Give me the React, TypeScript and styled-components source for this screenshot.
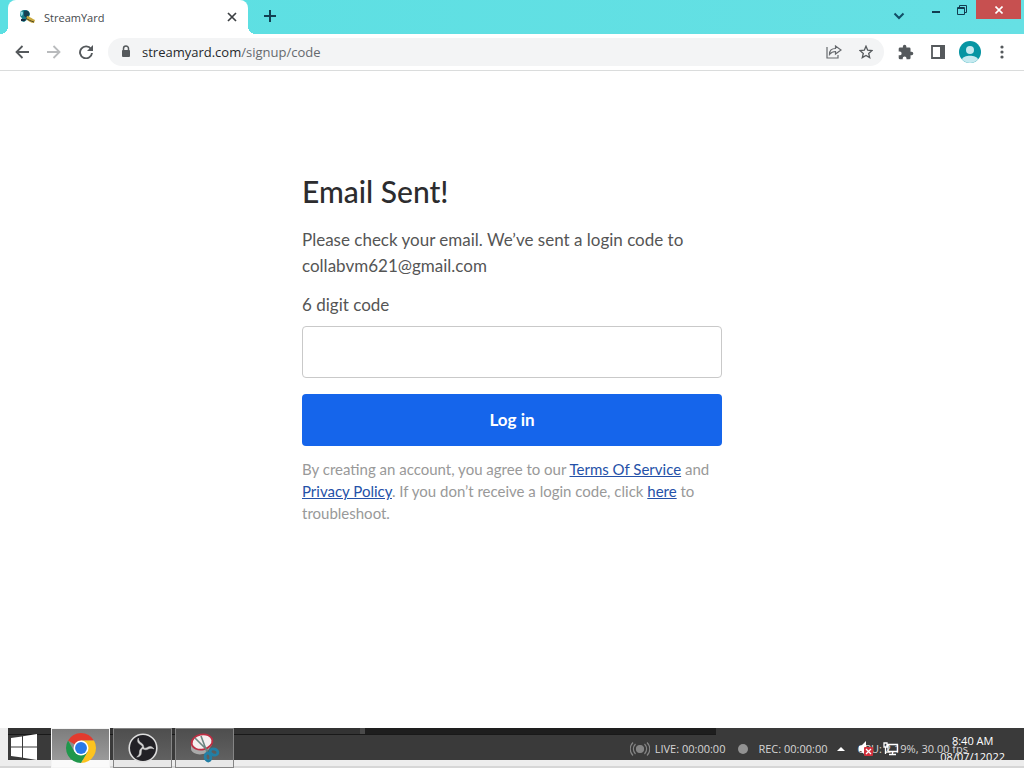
import React from "react";
import styled, { createGlobalStyle, css } from "styled-components";

const Global = createGlobalStyle`
  *, *::before, *::after { box-sizing: border-box; }
  body { margin: 0; background: #fff; font-family: "Open Sans", "Noto Sans", sans-serif; }
  button { font: inherit; padding: 0; border: 0; background: none; color: inherit; }
  h1, p { margin: 0; }
`;

const Screen = styled.div`
  min-height: 100vh;
  display: flex;
  flex-direction: column;
  overflow: hidden;
`;

const TabStrip = styled.header`
  height: 34px;
  display: flex;
  background: linear-gradient(90deg, #5bdfe2, #66e0e4);
  padding-left: 8px;
`;

const Tab = styled.div`
  position: relative;
  width: 240px;
  display: flex;
  align-items: center;
  gap: 8px;
  padding: 0 8px 0 11px;
  background: #fff;
  border-radius: 8px 8px 0 0;
  font-size: 11px;
  color: #45494d;
  &::before, &::after {
    content: "";
    position: absolute;
    bottom: 0;
    width: 8px;
    height: 8px;
  }
  &::before { left: -8px; background: radial-gradient(circle at 0 0, transparent 8px, #fff 8px); }
  &::after { right: -8px; background: radial-gradient(circle at 100% 0, transparent 8px, #fff 8px); }
`;

const TabTitle = styled.span`flex: 1;`;

const IconButton = styled.button<{ $size?: number }>`
  width: ${(p) => p.$size ?? 32}px;
  height: ${(p) => p.$size ?? 32}px;
  flex: none;
  display: flex;
  align-items: center;
  justify-content: center;
`;

const NewTab = styled(IconButton)`margin-left: 6px;`;

const WindowControls = styled.div`
  margin-left: auto;
  display: flex;
  padding-right: 3px;
`;

const WindowButton = styled.button<{ $width: number; $close?: boolean }>`
  width: ${(p) => p.$width}px;
  height: 19px;
  display: flex;
  align-items: center;
  justify-content: center;
  ${(p) => p.$close && css`background: #c75050;`}
`;

const TabSearch = styled(IconButton)`margin-right: 10px;`;

const Toolbar = styled.nav`
  height: 37px;
  display: flex;
  align-items: center;
  padding: 0 6px;
  border-bottom: 1px solid #dadcdc;
  color: #55595c;
`;

const AddressBar = styled.div`
  flex: 1;
  height: 28px;
  margin: 0 6px;
  display: flex;
  align-items: center;
  padding: 0 2px 0 10px;
  border-radius: 14px;
  background: #f3f4f5;
`;

const Address = styled.p`
  flex: 1;
  margin-left: 8px;
  font-size: 13px;
  color: #65696d;
  strong { font-weight: 400; color: #26292c; }
`;

const Content = styled.main`
  flex: 1;
  padding: 100px 16px 40px;
  font-family: Lato, "Open Sans", sans-serif;
`;

const Form = styled.form`
  width: 100%;
  max-width: 420px;
  margin: 0 auto;
  display: flex;
  flex-direction: column;
`;

const Title = styled.h1`
  font-size: 30px;
  line-height: 40px;
  font-weight: 500;
  color: #2c2c2e;
`;

const Lead = styled.p`
  margin-top: 16px;
  font-size: 17px;
  line-height: 26px;
  color: #555;
`;

const Label = styled.label`
  margin-top: 13px;
  font-size: 17px;
  line-height: 26px;
  color: #555;
`;

const CodeInput = styled.input`
  width: 100%;
  height: 52px;
  margin-top: 8px;
  padding: 0 16px;
  border: 1px solid #c9c9c9;
  border-radius: 4px;
  font: inherit;
  background: #fff;
`;

const Submit = styled.button`
  height: 52px;
  margin-top: 16px;
  padding-bottom: 2px;
  border-radius: 4px;
  background: #1565eb;
  color: #fff;
  font-size: 17px;
  font-weight: 700;
`;

const Legal = styled.p`
  margin-top: 12px;
  font-size: 15px;
  line-height: 22px;
  color: #999;
  a { color: #2451a8; }
`;

const Taskbar = styled.footer`
  position: relative;
  height: 40px;
  display: flex;
  padding-left: 8px;
  background: #ededed;
  border-bottom: 2px solid #d6d6d6;
  color: #fff;
`;

const Ground = styled.div`
  position: absolute;
  inset: 0 0 6px 8px;
  background: #3a3a3a;
`;

const RecorderEdge = styled.div`
  position: absolute;
  top: 0;
  left: 8px;
  width: 708px;
  height: 7px;
  background: linear-gradient(90deg, #333 352px, #4a4a4a 352px, #4a4a4a 357px, #1e1e1e 357px);
  border-bottom: 1px solid #191919;
`;

const StartButton = styled(IconButton)`
  position: relative;
  width: 43px;
  height: 38px;
  justify-content: flex-start;
  padding-left: 3px;
`;

const TaskButton = styled.button<{ $active?: boolean }>`
  position: relative;
  width: 59px;
  height: 40px;
  margin-right: 3px;
  border: 1px solid ${(p) => (p.$active ? "#f4f4f4" : "#858585")};
  background: linear-gradient(
    ${(p) => (p.$active ? "#7d7d7d, #9a9a9a" : "#4e4e4e, #616161")} 31px,
    ${(p) => (p.$active ? "#fafafa" : "#e8e8e8")} 31px
  );
  display: flex;
  align-items: center;
  justify-content: center;
`;

const Recorder = styled.div`
  position: relative;
  margin-left: auto;
  height: 32px;
  padding: 10px 56px 0 0;
  display: flex;
  align-items: center;
  font-size: 11px;
  line-height: 20px;
  white-space: nowrap;
  color: #d6d6d6;
`;

const Reading = styled.span<{ $before: number; $after: number }>`
  margin: 0 ${(p) => p.$after}px 0 ${(p) => p.$before}px;
`;

const Tray = styled.div`
  position: absolute;
  top: 0;
  right: 19px;
  height: 32px;
  display: flex;
  overflow: hidden;
`;

const TrayIcons = styled.div`
  display: flex;
  align-items: center;
  padding: 10px 41px 0 0;
  svg + svg { margin-left: 8px; }
`;

const Clock = styled.time`
  font-size: 11px;
  line-height: 16px;
  padding-top: 5px;
  text-align: center;
`;

const Duck = () => (
  <svg width="17" height="16" viewBox="0 0 17 16">
    <path d="M1 5C1 2 3 1 6 1c3 0 5 2 5 4.500L9 10 5 13 2 12 3 9C1.500 8 1 7 1 5z" fill="#167b87" />
    <path d="M5 2c4-1 6 1 5 4L8 9 5 7z" fill="#164154" />
    <path d="M1 3.500C2 2 4 2 4 4S3 7 2 7z" fill="#8edce5" />
    <path d="M8 7c2 0 4 2 6 3l2 1-1 3c-3 0-6-2-8-4z" fill="#c9a83c" />
    <path d="M7 9c2 2 5 3 8 4" stroke="#4a4527" fill="none" />
    <path d="M2 10l5 0-1 2-4 0z" fill="#152d43" />
  </svg>
);

const Chrome = () => (
  <svg width="30" height="30" viewBox="0 0 48 48">
    <path d="M24 24 3.220 12A24 24 0 0 1 44.780 12L24 12z" fill="#e33b2e" />
    <path d="M24 12H44.780A24 24 0 0 1 24 48L34.400 30z" fill="#fcc31e" />
    <path d="M34.400 30 24 48A24 24 0 0 1 3.220 12L13.600 30 24 34z" fill="#20974b" />
    <circle cx="24" cy="24" r="12" fill="#fff" />
    <circle cx="24" cy="24" r="9.500" fill="#2878e8" />
  </svg>
);

const Obs = () => (
  <svg width="30" height="30" viewBox="0 0 30 30">
    <circle cx="15" cy="15" r="13.800" fill="#222126" stroke="#dedede" strokeWidth="1.600" />
    {[0, 120, 240].map((a) => (
      <path
        key={a}
        transform={`rotate(${a} 15 15)`}
        d="M15 15.800C14.600 13.500 14 12.300 12 11.300 9.500 10 9 7.500 10.300 5 10.500 7.500 11.500 9 13.300 10 15.300 11.200 16 13 15.700 15.600z"
        fill="#d4d4d4"
        stroke="#d4d4d4"
        strokeWidth=".5"
      />
    ))}
  </svg>
);

const Snip = () => (
  <svg width="30" height="32" viewBox="0 0 30 32">
    <path d="M1 11v6c1 5 9 7 15 4l6-8z" fill="#a9a9a9" />
    <ellipse cx="12" cy="10" rx="10.500" ry="7.500" fill="#f5eeee" stroke="#bd2e43" strokeWidth="1.800" transform="rotate(-12 12 10)" />
    <path d="M5 6l13 13M11 4l6 16" stroke="#6b8580" strokeWidth="1.600" />
    <g fill="none" stroke="#237fa5" strokeWidth="2.800">
      <ellipse cx="24" cy="20" rx="4" ry="3" transform="rotate(20 24 20)" />
      <ellipse cx="18" cy="25" rx="2.800" ry="4" transform="rotate(-10 18 25)" />
    </g>
  </svg>
);

export default function App() {
  return (
    <Screen>
      <Global />
      <TabStrip>
        <Tab>
          <Duck />
          <TabTitle>StreamYard</TabTitle>
          <IconButton $size={16} aria-label="Close tab">
            <svg width="10" height="10" viewBox="0 0 10 10"><path d="M1 1l8 8M9 1L1 9" stroke="#3c4043" strokeWidth="1.700" /></svg>
          </IconButton>
        </Tab>
        <NewTab aria-label="New tab">
          <svg width="12" height="12" viewBox="0 0 12 12"><path d="M6 0v12M0 6h12" stroke="#124052" strokeWidth="2" /></svg>
        </NewTab>
        <WindowControls>
          <TabSearch aria-label="Search tabs">
            <svg width="12" height="8" viewBox="0 0 12 8"><path d="M1.500 1.500L6 6l4.500-4.500" fill="none" stroke="#124e66" strokeWidth="2" /></svg>
          </TabSearch>
          <WindowButton $width={22} aria-label="Minimize">
            <svg width="8" height="10" viewBox="0 0 8 10"><path d="M0 7h8" stroke="#123c50" strokeWidth="2" /></svg>
          </WindowButton>
          <WindowButton $width={29} aria-label="Restore">
            <svg width="10" height="10" viewBox="0 0 10 10"><path d="M.5 2.500h7v7h-7zM.5 3.500h7M2.500 2V.5h7v7H8" fill="none" stroke="#123c50" /></svg>
          </WindowButton>
          <WindowButton $width={45} $close aria-label="Close">
            <svg width="8" height="8" viewBox="0 0 8 8"><path d="M.5.5l7 7M7.500.5l-7 7" stroke="#fff" strokeWidth="1.600" /></svg>
          </WindowButton>
        </WindowControls>
      </TabStrip>

      <Toolbar>
        <IconButton aria-label="Back">
          <svg width="14" height="14" viewBox="0 0 14 14"><path d="M14 7H1.500M7.500 1l-6 6 6 6" fill="none" stroke="currentColor" strokeWidth="1.800" /></svg>
        </IconButton>
        <IconButton aria-label="Forward" disabled>
          <svg width="14" height="14" viewBox="0 0 14 14"><path d="M0 7h12.500M6.500 1l6 6-6 6" fill="none" stroke="#b9bbbd" strokeWidth="1.800" /></svg>
        </IconButton>
        <IconButton aria-label="Reload">
          <svg width="14" height="14" viewBox="0 0 14 14"><path d="M12 4A6 6 0 1 0 13 8" fill="none" stroke="currentColor" strokeWidth="1.900" /><path d="M14 0v6H8z" fill="currentColor" /></svg>
        </IconButton>
        <AddressBar>
          <svg width="16" height="16" viewBox="0 0 16 16"><path d="M5.500 7V4.500a2.500 2.500 0 0 1 5 0V7" fill="none" stroke="#55595c" strokeWidth="1.500" /><rect x="4" y="6" width="8" height="7" rx="1" fill="#55595c" /></svg>
          <Address><strong>streamyard.com</strong>/signup/code</Address>
          <IconButton aria-label="Share">
            <svg width="16" height="14" viewBox="0 0 16 14"><path d="M1 2v11h11v-3M3.500 9.500c0-4 2-6 6-6V1L15 5l-5.500 4V6.500c-3 0-4.500 1-6 3z" fill="none" stroke="#66696d" strokeWidth="1.200" /></svg>
          </IconButton>
          <IconButton aria-label="Bookmark">
            <svg width="14" height="14" viewBox="0 0 14 14"><path d="M7 1.200l1.700 4 4.300.4-3.300 2.800 1 4.200L7 10.400l-3.700 2.200 1-4.200L1 5.600l4.300-.4z" fill="none" stroke="#55595c" strokeWidth="1.300" /></svg>
          </IconButton>
        </AddressBar>
        <IconButton aria-label="Extensions">
          <svg width="16" height="16" viewBox="1 0 23 23"><path fill="currentColor" d="M20.500 11H19V7a2 2 0 0 0-2-2h-4V3.500a2.500 2.500 0 0 0-5 0V5H4a2 2 0 0 0-2 2v3.800h1.500a2.700 2.700 0 0 1 0 5.400H2V20a2 2 0 0 0 2 2h3.800v-1.500a2.700 2.700 0 0 1 5.400 0V22H17a2 2 0 0 0 2-2v-4h1.500a2.500 2.500 0 0 0 0-5z" /></svg>
        </IconButton>
        <IconButton aria-label="Side panel">
          <svg width="14" height="14" viewBox="0 0 14 14"><path d="M1 1h12v12H1z" fill="none" stroke="currentColor" strokeWidth="1.800" /><path d="M9 0h5v14H9z" fill="currentColor" /></svg>
        </IconButton>
        <IconButton aria-label="Profile">
          <svg width="22" height="22" viewBox="0 0 22 22"><circle cx="11" cy="11" r="11" fill="#0695a3" /><circle cx="11" cy="9" r="4" fill="#c5eaf0" /><path d="M3 18.500c1-5 15-5 16 0A11 11 0 0 1 3 18.500z" fill="#c5eaf0" /></svg>
        </IconButton>
        <IconButton aria-label="Menu">
          <svg width="4" height="14" viewBox="0 0 4 14" fill="currentColor"><circle cx="2" cy="2" r="1.600" /><circle cx="2" cy="7" r="1.600" /><circle cx="2" cy="12" r="1.600" /></svg>
        </IconButton>
      </Toolbar>

      <Content>
        <Form onSubmit={(e) => e.preventDefault()}>
          <Title>Email Sent!</Title>
          <Lead>Please check your email. We’ve sent a login code to collabvm621@gmail.com</Lead>
          <Label htmlFor="code">6 digit code</Label>
          <CodeInput id="code" inputMode="numeric" maxLength={6} />
          <Submit type="submit">Log in</Submit>
          <Legal>
            By creating an account, you agree to our <a href="#terms">Terms Of Service</a> and{" "}
            <a href="#privacy">Privacy Policy</a>. If you don’t receive a login code, click <a href="#help">here</a> to
            troubleshoot.
          </Legal>
        </Form>
      </Content>

      <Taskbar>
        <Ground />
        <RecorderEdge />
        <StartButton aria-label="Start">
          <svg width="26" height="26" viewBox="0 0 26 26" fill="#fff"><path d="M0 4l11-1.500V12.500H0zM12 2.300L26 0v12.500H12zM0 13.500h11v10L0 22zM12 13.500h14V26l-14-2.300z" /></svg>
        </StartButton>
        <TaskButton $active aria-label="Chrome"><Chrome /></TaskButton>
        <TaskButton aria-label="OBS Studio"><Obs /></TaskButton>
        <TaskButton aria-label="Snipping Tool"><Snip /></TaskButton>
        <Recorder>
          <svg width="20" height="14" viewBox="0 0 20 14" fill="none" stroke="#858585" strokeWidth="1.200"><circle cx="10" cy="7" r="3.500" fill="#858585" /><path d="M5.500 2a7 7 0 0 0 0 10M14.500 2a7 7 0 0 1 0 10M3 .5a9 9 0 0 0 0 13M17 .5a9 9 0 0 1 0 13" /></svg>
          <Reading $before={5} $after={13}>LIVE: 00:00:00</Reading>
          <svg width="10" height="10" viewBox="0 0 10 10"><circle cx="5" cy="5" r="5" fill="#929292" /></svg>
          <Reading $before={10} $after={30}>REC: 00:00:00</Reading>
          <span>CPU: 2.19%, 30.00 fps</span>
        </Recorder>
        <Tray>
          <TrayIcons>
            <svg width="8" height="4" viewBox="0 0 8 4"><path d="M0 4l4-4 4 4z" fill="#fff" /></svg>
            <svg width="22" height="16" viewBox="0 0 22 16"><path d="M6 5h2l5-5v15l-5-5H6z" fill="#fff" /><rect x="11" y="6" width="9" height="9" rx="1" fill="#d2303c" /><path d="M13 8l5 5M18 8l-5 5" stroke="#fff" strokeWidth="1.300" /></svg>
            <svg width="16" height="14" viewBox="0 0 16 14" fill="none" stroke="#fff" strokeWidth="1.300"><path d="M5 2.500h9.500v7H5zM9.500 9.500v3M6 12.500h7M1 1v4h3V1zM2.500 5v7" /></svg>
          </TrayIcons>
          <Clock>8:40 AM<br />08/07/12022</Clock>
        </Tray>
      </Taskbar>
    </Screen>
  );
}
